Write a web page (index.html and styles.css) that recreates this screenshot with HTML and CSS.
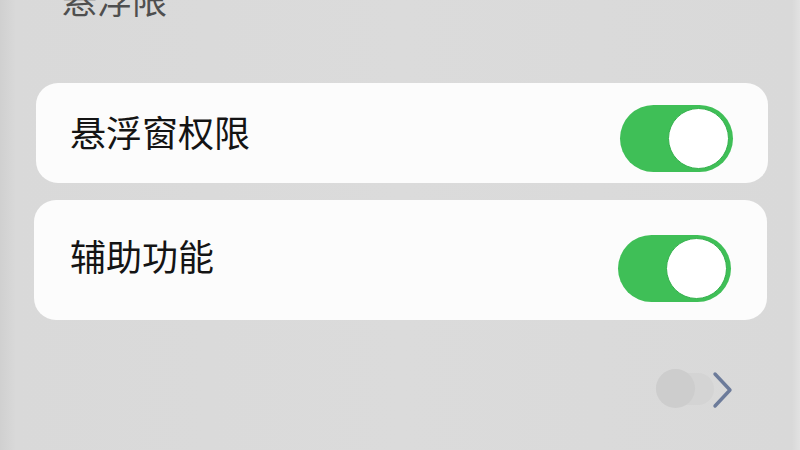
FILE: index.html
```html
<!DOCTYPE html>
<html lang="zh">
<head>
<meta charset="utf-8">
<link rel="stylesheet" href="styles.css">
</head>
<body>
<div class="page">
  <div class="section-title">悬浮限</div>
  <div class="card card-1">
    <span class="label">悬浮窗权限</span>
    <span class="toggle toggle-1"><span class="knob"></span></span>
  </div>
  <div class="card card-2">
    <span class="label">辅助功能</span>
    <span class="toggle toggle-2"><span class="knob"></span></span>
  </div>
  <div class="footer">
    <span class="mini-toggle"><span class="mini-knob"></span></span>
    <svg class="chevron" width="24" height="40" viewBox="0 0 24 40">
      <path d="M4 4 L19 20 L4 36" fill="none" stroke="#6c7b9a" stroke-width="3.4" stroke-linecap="round" stroke-linejoin="round"/>
    </svg>
  </div>
</div>
</body>
</html>
```

FILE: styles.css
```css
html, body {
  margin: 0;
  padding: 0;
}
body {
  width: 800px;
  height: 450px;
  overflow: hidden;
  background: linear-gradient(90deg, #d0d0d0 0%, #d9d9d9 2%, #dbdbdb 50%, #d9d9d9 99%, #e2e2e2 100%);
  font-family: "Noto Sans CJK SC", "Noto Sans", sans-serif;
}
.page {
  display: flex;
  flex-direction: column;
}
.section-title {
  margin-top: -21px;
  margin-left: 62px;
  height: 40px;
  line-height: 40px;
  font-size: 35px;
  color: #4f4f4f;
}
.card {
  background: #fcfcfc;
  border-radius: 22px;
  display: flex;
  align-items: center;
  justify-content: space-between;
  box-sizing: border-box;
}
.card-1 {
  margin-top: 64px;
  margin-left: 36px;
  width: 732px;
  height: 100px;
  padding: 0 35px 4px 34px;
}
.card-2 {
  margin-top: 17px;
  margin-left: 34px;
  width: 733px;
  height: 120px;
  padding: 0 36px 10px 36px;
}
.label {
  font-size: 36px;
  color: #141414;
  line-height: 1;
}
.toggle {
  position: relative;
  width: 113px;
  height: 67px;
  border-radius: 34px;
  background: #3fbf57;
  display: block;
}
.toggle-1 {
  margin-top: 14px;
}
.toggle-2 {
  margin-top: 26px;
}
.knob {
  position: absolute;
  right: 4px;
  top: 3px;
  width: 59px;
  height: 59px;
  border-radius: 50%;
  background: #ffffff;
  border: 1px solid #34b04c;
}
.footer {
  margin-top: 48px;
  margin-left: 656px;
  display: flex;
  align-items: center;
  height: 42px;
}
.mini-toggle {
  position: relative;
  width: 58px;
  height: 32px;
  border-radius: 16px;
  background: #d4d4d4;
  display: block;
}
.mini-knob {
  position: absolute;
  left: 0;
  top: -4px;
  width: 39px;
  height: 39px;
  border-radius: 50%;
  background: #cdcdcd;
}
.chevron {
  margin-left: -3px;
  margin-top: 2px;
  display: block;
}
```
